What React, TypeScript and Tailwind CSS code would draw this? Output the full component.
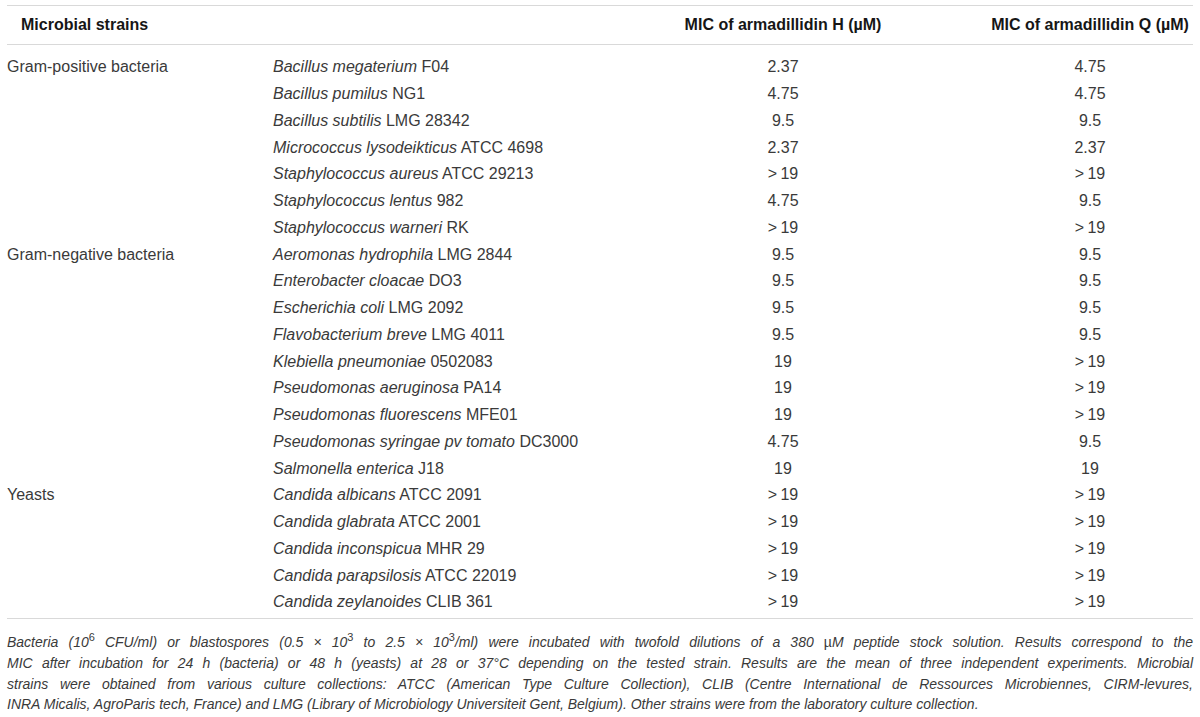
import React from 'react';

type Row = {
  group?: string;
  species: string;
  strain: string;
  h: string;
  q: string;
};

const GT = '>\u200919';

const rows: Row[] = [
  { group: 'Gram-positive bacteria', species: 'Bacillus megaterium', strain: 'F04', h: '2.37', q: '4.75' },
  { species: 'Bacillus pumilus', strain: 'NG1', h: '4.75', q: '4.75' },
  { species: 'Bacillus subtilis', strain: 'LMG 28342', h: '9.5', q: '9.5' },
  { species: 'Micrococcus lysodeikticus', strain: 'ATCC 4698', h: '2.37', q: '2.37' },
  { species: 'Staphylococcus aureus', strain: 'ATCC 29213', h: GT, q: GT },
  { species: 'Staphylococcus lentus', strain: '982', h: '4.75', q: '9.5' },
  { species: 'Staphylococcus warneri', strain: 'RK', h: GT, q: GT },
  { group: 'Gram-negative bacteria', species: 'Aeromonas hydrophila', strain: 'LMG 2844', h: '9.5', q: '9.5' },
  { species: 'Enterobacter cloacae', strain: 'DO3', h: '9.5', q: '9.5' },
  { species: 'Escherichia coli', strain: 'LMG 2092', h: '9.5', q: '9.5' },
  { species: 'Flavobacterium breve', strain: 'LMG 4011', h: '9.5', q: '9.5' },
  { species: 'Klebiella pneumoniae', strain: '0502083', h: '19', q: GT },
  { species: 'Pseudomonas aeruginosa', strain: 'PA14', h: '19', q: GT },
  { species: 'Pseudomonas fluorescens', strain: 'MFE01', h: '19', q: GT },
  { species: 'Pseudomonas syringae pv tomato', strain: 'DC3000', h: '4.75', q: '9.5' },
  { species: 'Salmonella enterica', strain: 'J18', h: '19', q: '19' },
  { group: 'Yeasts', species: 'Candida albicans', strain: 'ATCC 2091', h: GT, q: GT },
  { species: 'Candida glabrata', strain: 'ATCC 2001', h: GT, q: GT },
  { species: 'Candida inconspicua', strain: 'MHR 29', h: GT, q: GT },
  { species: 'Candida parapsilosis', strain: 'ATCC 22019', h: GT, q: GT },
  { species: 'Candida zeylanoides', strain: 'CLIB 361', h: GT, q: GT },
];

const Sup: React.FC<{ children: React.ReactNode }> = ({ children }) => (
  <span className="relative top-[-6px] text-[11px] leading-none not-italic">{children}</span>
);

// justified caption lines, last one left ragged
const lineCls = 'text-justify [text-align-last:justify] whitespace-nowrap';

const App: React.FC = () => {
  return (
    <div className="w-[1200px] h-[717px] bg-white px-[7px] pt-[5px] font-['Liberation_Sans',Arial,sans-serif] text-[#3a3a3a] overflow-hidden">
      <div className="border-t border-b border-[#d9d9d9] h-[40px] grid grid-cols-[266px_380px_260px_280px] items-center text-[16px] font-bold text-[#161616]">
        <div className="pl-[14px]">Microbial strains</div>
        <div />
        <div className="text-center">MIC of armadillidin H (µM)</div>
        <div className="pl-[74px] text-center">MIC of armadillidin Q (µM)</div>
      </div>

      <div className="pt-[9px] pb-[2.5px] border-b border-[#d9d9d9] text-[16px]">
        {rows.map((r, i) => (
          <div key={i} className="grid grid-cols-[266px_380px_260px_280px] h-[26.75px] items-center leading-none">
            <div>{r.group ?? ''}</div>
            <div>
              <span className="italic">{r.species}</span> {r.strain}
            </div>
            <div className="text-center">{r.h}</div>
            <div className="pl-[74px] text-center">{r.q}</div>
          </div>
        ))}
      </div>

      <div className="pt-[13px] italic text-[14px] leading-[20.7px] text-[#3a3a3a]">
        <div className={lineCls}>
          Bacteria (10<Sup>6</Sup> CFU/ml) or blastospores (0.5 × 10<Sup>3</Sup> to 2.5 × 10<Sup>3</Sup>/ml) were incubated with twofold dilutions of a 380 <span className="not-italic">µ</span>M peptide stock solution. Results correspond to the
        </div>
        <div className={lineCls}>
          MIC after incubation for 24 h (bacteria) or 48 h (yeasts) at 28 or 37°C depending on the tested strain. Results are the mean of three independent experiments. Microbial
        </div>
        <div className={lineCls}>
          strains were obtained from various culture collections: ATCC (American Type Culture Collection), CLIB (Centre International de Ressources Microbiennes, CIRM-levures,
        </div>
        <div className="whitespace-nowrap">
          INRA Micalis, AgroParis tech, France) and LMG (Library of Microbiology Universiteit Gent, Belgium). Other strains were from the laboratory culture collection.
        </div>
      </div>
    </div>
  );
};

export default App;
